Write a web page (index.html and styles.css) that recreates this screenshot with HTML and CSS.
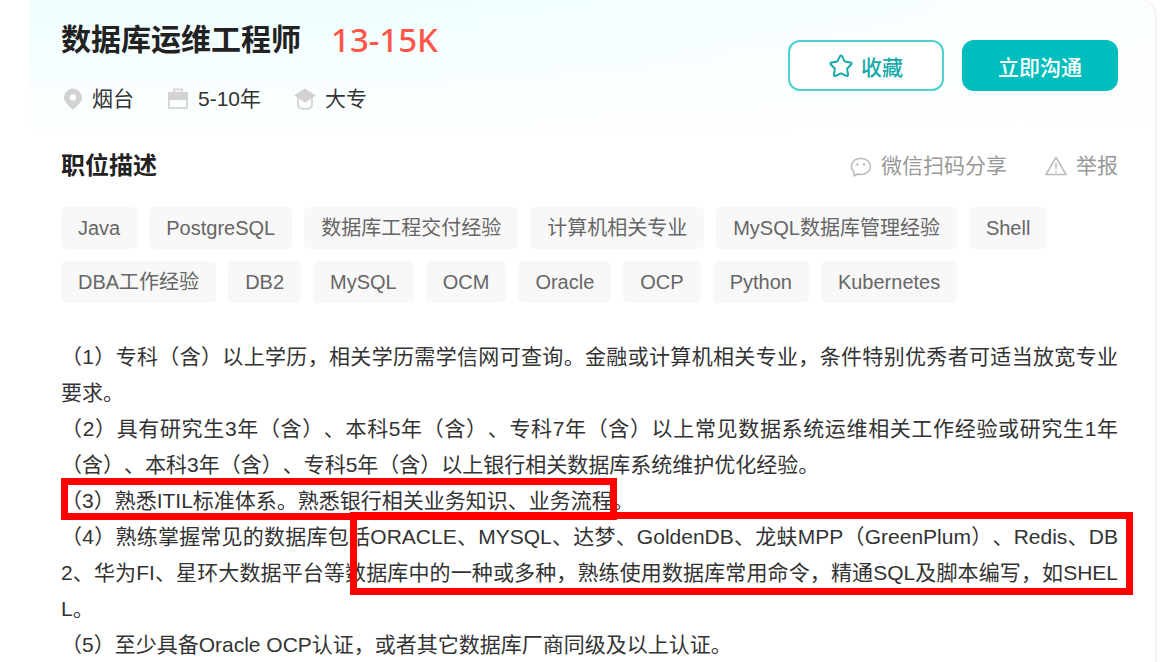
FILE: index.html
```
<!DOCTYPE html>
<html lang="zh-CN">
<head>
    <meta charset="UTF-8">
    <meta name="viewport" content="width=device-width, initial-scale=1.0">
    <title>数据库运维工程师</title>
    <link rel="stylesheet" href="styles.css">
</head>
<body>
    <main class="job-card">
        <div class="job-header">
            <div class="job-info">
                <div class="job-title">
                    <h1>数据库运维工程师</h1>
                    <span class="salary">13-15K</span>
                </div>
                <ul class="job-meta">
                    <li>
                        <svg class="icon" viewBox="0 0 22 22"><path fill="#d2d2d2" fill-rule="evenodd" d="M12 0.500a9 9 0 0 1 9 9c0 4-3 7-9 12.200C6 16.500 3 13.500 3 9.500a9 9 0 0 1 9-9zm0 5.800a3.200 3.200 0 1 0 0 6.400 3.200 3.200 0 0 0 0-6.400z"/></svg>
                        烟台
                    </li>
                    <li>
                        <svg class="icon" viewBox="0 0 22 22"><path fill="none" stroke="#d8d8d8" stroke-width="2" d="M7 4V1.500h8V4M2 11v9h18v-9"/><path fill="#d2d2d2" d="M1 4h20v8H1z"/></svg>
                        5-10年
                    </li>
                    <li>
                        <svg class="icon" viewBox="0 0 22 22"><path fill="none" stroke="#d8d8d8" stroke-width="2" d="M4 10v7q0 4 7 4t7-4v-7"/><path fill="#d2d2d2" d="M11 0.500 22 7.500 11 14.500 0 7.500z"/></svg>
                        大专
                    </li>
                </ul>
            </div>
            <div class="job-actions">
                <button type="button" class="btn btn-outline">
                    <svg class="icon-star" viewBox="0 0 24 24"><path fill="none" stroke="currentColor" stroke-width="2" stroke-linejoin="round" d="M10.900 2.400q1.100-1.600 2.200 0l2.700 5.200 5.600.9q2 .5.700 2l-4 4.200.9 5.900q.1 1.900-1.700 1.300L12 19.300l-5.300 2.600q-1.800.6-1.700-1.300l.9-5.900-4-4.200q-1.300-1.500.7-2l5.600-.9z"/></svg>
                    收藏
                </button>
                <button type="button" class="btn btn-primary">立即沟通</button>
            </div>
        </div>

        <div class="section-header">
            <h2>职位描述</h2>
            <div class="section-links">
                <a href="#">
                    <svg class="icon" viewBox="0 0 22 22"><path fill="none" stroke="#bbb" stroke-width="1.500" stroke-linejoin="round" d="M4 17C-1 12 1.500 3.500 11 3.500c5.500 0 9.500 3.500 9.500 8s-4 8-9.500 8c-1.500 0-2.500 0-3.500-.5L4 21z"/><circle cx="7.500" cy="9.500" r="1.200" fill="#bbb"/><circle cx="14" cy="9.500" r="1.200" fill="#bbb"/></svg>
                    微信扫码分享
                </a>
                <a href="#">
                    <svg class="icon" viewBox="0 0 22 22"><path fill="none" stroke="#bbb" stroke-width="1.500" stroke-linejoin="round" d="M11 2.500 21 19.500H1zM11 8v6M11 15.500v2"/></svg>
                    举报
                </a>
            </div>
        </div>

        <ul class="tags">
            <li>Java</li>
            <li>PostgreSQL</li>
            <li>数据库工程交付经验</li>
            <li>计算机相关专业</li>
            <li>MySQL数据库管理经验</li>
            <li>Shell</li>
            <li>DBA工作经验</li>
            <li>DB2</li>
            <li>MySQL</li>
            <li>OCM</li>
            <li>Oracle</li>
            <li>OCP</li>
            <li>Python</li>
            <li>Kubernetes</li>
        </ul>

        <div class="description">
            <p>（1）专科（含）以上学历，相关学历需学信网可查询。金融或计算机相关专业，条件特别优秀者可适当放宽专业要求。</p>
            <p>（2）具有研究生3年（含）、本科5年（含）、专科7年（含）以上常见数据系统运维相关工作经验或研究生1年（含）、本科3年（含）、专科5年（含）以上银行相关数据库系统维护优化经验。</p>
            <p>（3）熟悉ITIL标准体系。熟悉银行相关业务知识、业务流程。</p>
            <p>（4）熟练掌握常见的数据库包括ORACLE、MYSQL、达梦、GoldenDB、龙蚨MPP（GreenPlum）、Redis、DB2、华为FI、星环大数据平台等数据库中的一种或多种，熟练使用数据库常用命令，精通SQL及脚本编写，如SHELL。</p>
            <p>（5）至少具备Oracle OCP认证，或者其它数据库厂商同级及以上认证。</p>
            <div class="mark mark-skills"></div>
            <div class="mark mark-databases"></div>
        </div>
    </main>
</body>
</html>
```
FILE: styles.css
```
* {
    box-sizing: border-box;
}
body {
    margin: 0;
    background-color: #fff;
    font-family: "Liberation Sans", "Noto Sans CJK SC", sans-serif;
    font-size: 21px;
    color: #333;
}
h1, h2, p, ul {
    margin: 0;
    padding: 0;
}
ul {
    list-style: none;
}
.job-card {
    margin: 0 17px 0 30px;
    padding: 22px 37px 0 31px;
    border-radius: 0 16px 0 0;
    background: linear-gradient(to right, rgba(255, 255, 255, 0) 30%, rgba(255, 255, 255, 0.8)), linear-gradient(#effeff, #fff 145px);
    box-shadow: 2px 0 2px #f1f1f1;
}
.job-header {
    display: flex;
    justify-content: space-between;
}
.job-title {
    display: flex;
    align-items: center;
    gap: 30px;
    height: 36px;
}
h1 {
    font-size: 30px;
    line-height: 36px;
    color: #222;
}
.salary {
    font-family: "Noto Sans", sans-serif;
    font-size: 33px;
    font-weight: 500;
    line-height: 36px;
    color: #fe574a;
}
.job-meta {
    display: flex;
    gap: 33px;
    margin-top: 26px;
    line-height: 30px;
}
.job-meta li {
    display: flex;
    align-items: center;
    gap: 9px;
}
.icon {
    width: 22px;
    height: 22px;
}
.job-actions {
    display: flex;
    gap: 18px;
    margin-top: 18px;
}
.btn {
    display: flex;
    align-items: center;
    justify-content: center;
    gap: 8px;
    width: 156px;
    height: 51px;
    border: 2px solid #00bebd;
    border-radius: 12px;
    font-family: inherit;
    font-size: 21px;
    font-weight: 500;
    cursor: pointer;
}
.btn-outline {
    border-color: #4dd1d0;
    background-color: #fff;
    color: #16a9a9;
}
.btn-primary {
    background-color: #00bebd;
    color: #fff;
}
.icon-star {
    width: 24px;
    height: 24px;
}
.section-header {
    display: flex;
    align-items: center;
    justify-content: space-between;
    margin-top: 37px;
    line-height: 30px;
}
h2 {
    font-size: 24px;
    color: #222;
}
.section-links {
    display: flex;
    gap: 38px;
}
.section-links a {
    display: flex;
    align-items: center;
    gap: 9px;
    color: #999;
    text-decoration: none;
}
.tags {
    display: flex;
    flex-wrap: wrap;
    gap: 12px;
    margin-top: 26px;
    font-size: 20px;
    line-height: 42px;
    color: #666;
}
.tags li {
    padding: 0 17px;
    border-radius: 5px;
    background-color: #f8f8f8;
}
.description {
    position: relative;
    margin-top: 36px;
    line-height: 36px;
    text-align: justify;
    word-break: break-all;
    text-spacing-trim: space-all;
}
/* red frames drawn over the text */
.mark {
    position: absolute;
    border: solid #f00;
    border-width: 7px;
}
.mark-skills {
    top: 139px;
    left: 0;
    width: 556px;
    height: 42px;
}
.mark-databases {
    top: 173px;
    left: 289px;
    right: -15px;
    height: 83px;
}
```
